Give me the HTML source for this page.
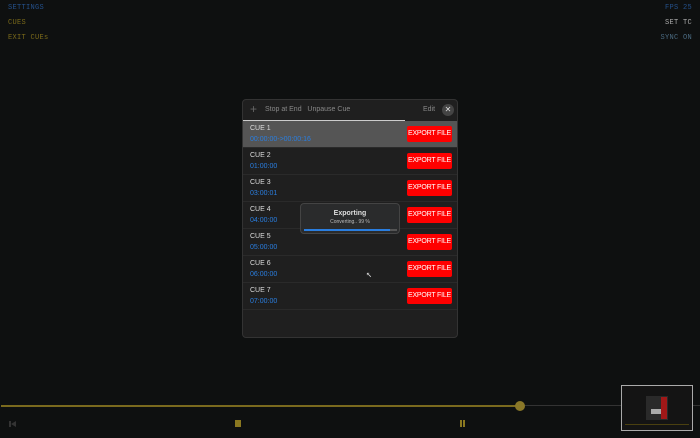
<!DOCTYPE html><html><head><style>
body{margin:0;width:700px;height:438px;background:#0e1010;position:relative;overflow:hidden;font-family:"Liberation Mono",monospace;}
.t{position:absolute;font-size:7px;letter-spacing:.3px}
.p{position:absolute;left:242px;top:99px;width:216px;height:239px;background:#1f1f1f;border:1px solid #333;border-radius:4px;box-sizing:border-box;font-family:"Liberation Sans",sans-serif;overflow:hidden}
.row{position:absolute;left:0;width:216px;height:27px;border-bottom:1px solid #2a2a2a;box-sizing:border-box}
.row .n{position:absolute;left:7px;top:4px;font-size:7px;color:#ddd}
.row .c{position:absolute;left:7px;top:15px;font-size:7px;color:#2a7ee0}
.row .b{position:absolute;left:164px;top:5px;width:45px;height:16px;background:#f00;color:#fff;font-size:7px;text-align:center;line-height:16px;border-radius:2px;white-space:nowrap;letter-spacing:-.2px}
</style></head><body>
<div class="t" style="left:8px;top:4px;color:#24508a">SETTINGS</div>
<div class="t" style="left:8px;top:19px;color:#7a6a1a">CUES</div>
<div class="t" style="left:8px;top:34px;color:#7a6a1a">EXIT CUEs</div>
<div class="t" style="right:8px;top:4px;color:#24508a">FPS 25</div>
<div class="t" style="right:8px;top:19px;color:#aaa">SET TC</div>
<div class="t" style="right:8px;top:34px;color:#4a6a80">SYNC ON</div>
<div class="p">
<div style="position:absolute;left:7px;top:2px;color:#666;font-size:12px">+</div>
<div style="position:absolute;left:22px;top:6px;color:#888;font-size:7px">Stop at End&nbsp;&nbsp; Unpause Cue</div>
<div style="position:absolute;left:180px;top:6px;color:#888;font-size:7px">Edit</div>
<div style="position:absolute;left:199px;top:4px;width:12px;height:12px;border-radius:50%;background:#444;color:#ddd;font-size:8px;text-align:center;line-height:12px">✕</div>
<div style="position:absolute;left:0;top:20px;width:162px;height:1px;background:#ccc"></div>
<div class="row" style="top:21px;background:#555"><div class="n">CUE 1</div><div class="c">00:00:00-&gt;00:00:16</div><div class="b">EXPORT FILE</div></div>
<div class="row" style="top:48px"><div class="n">CUE 2</div><div class="c">01:00:00</div><div class="b">EXPORT FILE</div></div>
<div class="row" style="top:75px"><div class="n">CUE 3</div><div class="c">03:00:01</div><div class="b">EXPORT FILE</div></div>
<div class="row" style="top:102px"><div class="n">CUE 4</div><div class="c">04:00:00</div><div class="b">EXPORT FILE</div></div>
<div class="row" style="top:129px"><div class="n">CUE 5</div><div class="c">05:00:00</div><div class="b">EXPORT FILE</div></div>
<div class="row" style="top:156px"><div class="n">CUE 6</div><div class="c">06:00:00</div><div class="b">EXPORT FILE</div></div>
<div class="row" style="top:183px"><div class="n">CUE 7</div><div class="c">07:00:00</div><div class="b">EXPORT FILE</div></div>
</div>
<div style="position:absolute;left:300px;top:203px;width:100px;height:31px;background:#2a2b2c;border:1px solid #444;border-radius:4px;box-sizing:border-box;font-family:'Liberation Sans',sans-serif;text-align:center">
<div style="font-size:7px;color:#ddd;margin-top:6px;font-weight:bold">Exporting</div>
<div style="font-size:5px;color:#bbb;margin-top:2px">Converting.. 99 %</div>
<div style="position:absolute;left:3px;top:25px;width:93px;height:2px;background:#555"><div style="width:86px;height:2px;background:#2a7ee0"></div></div>
</div>
<div style="position:absolute;left:366px;top:269px;color:#ccc;font-size:10px">↖</div>
<div style="position:absolute;left:1px;top:405px;width:519px;height:2px;background:#7a6a1e"></div>
<div style="position:absolute;left:520px;top:405px;width:180px;height:1px;background:#333"></div>
<div style="position:absolute;left:515px;top:401px;width:10px;height:10px;border-radius:50%;background:#8a7828"></div>
<div style="position:absolute;left:9px;top:421px;width:2px;height:6px;background:#333"></div>
<div style="position:absolute;left:11px;top:421px;width:0;height:0;border-top:3px solid transparent;border-bottom:3px solid transparent;border-right:5px solid #333"></div>
<div style="position:absolute;left:235px;top:420px;width:6px;height:7px;background:#8a7820"></div>
<div style="position:absolute;left:460px;top:420px;width:2px;height:7px;background:#8a7820"></div>
<div style="position:absolute;left:463px;top:420px;width:2px;height:7px;background:#8a7820"></div>
<div style="position:absolute;left:621px;top:385px;width:72px;height:46px;border:1px solid #aaa;box-sizing:border-box;background:#141414">
<div style="position:absolute;left:24px;top:10px;width:22px;height:24px;background:#2a2a2a"></div>
<div style="position:absolute;left:39px;top:11px;width:6px;height:22px;background:#a01818"></div>
<div style="position:absolute;left:29px;top:23px;width:10px;height:5px;background:#aaa"></div>
<div style="position:absolute;left:3px;top:38px;width:64px;height:1px;background:#4a4010"></div>
</div>
</body></html>
